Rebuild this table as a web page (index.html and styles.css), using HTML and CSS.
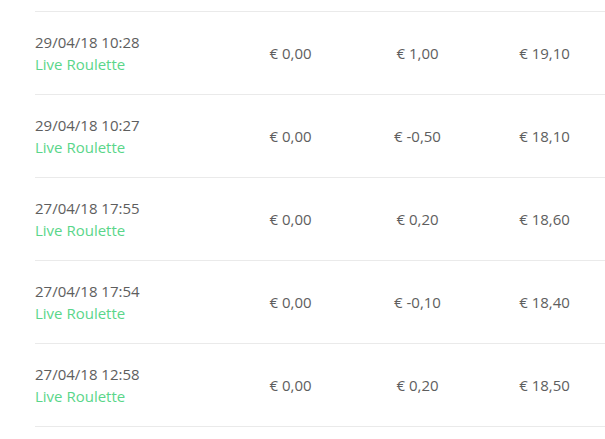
FILE: index.html
```html
<!DOCTYPE html>
<html>
<head>
<meta charset="utf-8">
<link rel="stylesheet" href="styles.css">
</head>
<body>
<div class="table">
  <div class="row">
    <div class="cell first"><div class="date">29/04/18 10:28</div><div class="game">Live Roulette</div></div>
    <div class="cell num">€ 0,00</div>
    <div class="cell num">€ 1,00</div>
    <div class="cell num">€ 19,10</div>
  </div>
  <div class="row">
    <div class="cell first"><div class="date">29/04/18 10:27</div><div class="game">Live Roulette</div></div>
    <div class="cell num">€ 0,00</div>
    <div class="cell num">€ -0,50</div>
    <div class="cell num">€ 18,10</div>
  </div>
  <div class="row">
    <div class="cell first"><div class="date">27/04/18 17:55</div><div class="game">Live Roulette</div></div>
    <div class="cell num">€ 0,00</div>
    <div class="cell num">€ 0,20</div>
    <div class="cell num">€ 18,60</div>
  </div>
  <div class="row">
    <div class="cell first"><div class="date">27/04/18 17:54</div><div class="game">Live Roulette</div></div>
    <div class="cell num">€ 0,00</div>
    <div class="cell num">€ -0,10</div>
    <div class="cell num">€ 18,40</div>
  </div>
  <div class="row">
    <div class="cell first"><div class="date">27/04/18 12:58</div><div class="game">Live Roulette</div></div>
    <div class="cell num">€ 0,00</div>
    <div class="cell num">€ 0,20</div>
    <div class="cell num">€ 18,50</div>
  </div>
</div>
</body>
</html>
```
FILE: styles.css
```css
html, body {
  margin: 0;
  padding: 0;
  background: #fff;
  overflow: hidden;
}
body {
  font-family: "Open Sans", "Liberation Sans", sans-serif;
  font-size: 15px;
  line-height: 22px;
  color: #5e5e5e;
}
.table {
  margin-left: 35px;
  padding-top: 11px;
  width: 573px;
}
.row {
  display: grid;
  grid-template-columns: 192px 127px 127px 127px;
  border-top: 1px solid #eaeaea;
  height: 82px;
  align-items: center;
}
.row:last-child {
  border-bottom: 1px solid #eaeaea;
}
.num {
  text-align: center;
}
.game {
  color: #5ad68a;
}
```
